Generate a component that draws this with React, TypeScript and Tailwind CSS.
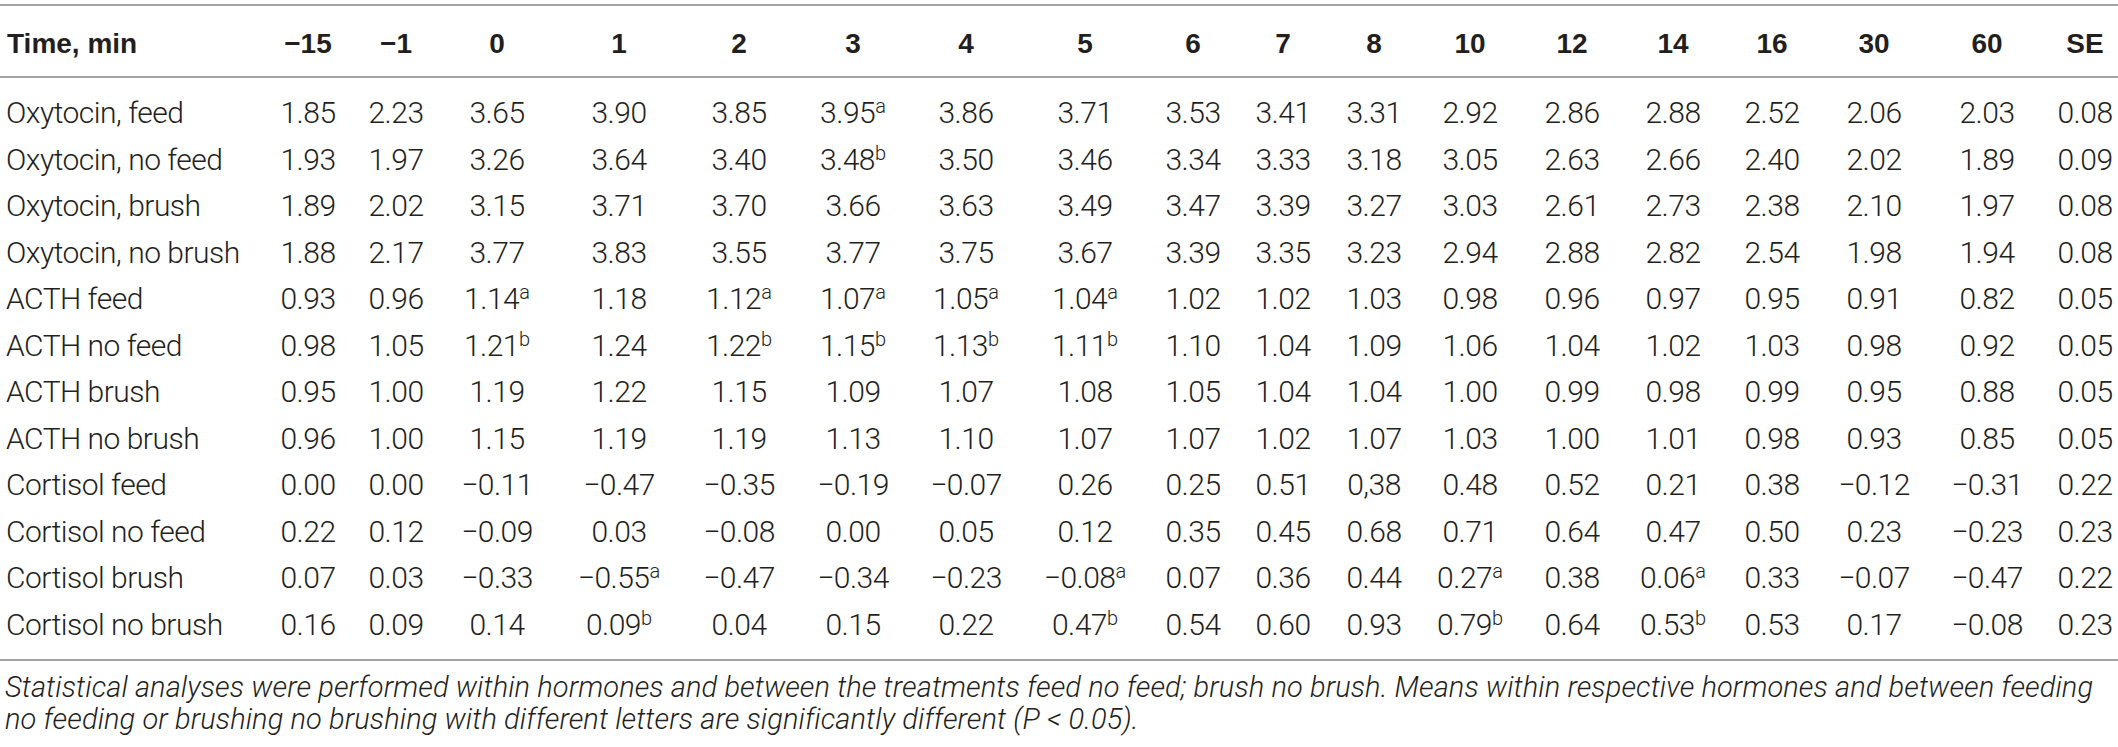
import React from 'react'

type Cell = string | [string, string]

const heads = ['−15', '−1', '0', '1', '2', '3', '4', '5', '6', '7', '8', '10', '12', '14', '16', '30', '60', 'SE']

const rows: { label: string; cells: Cell[] }[] = [
  { label: 'Oxytocin, feed', cells: ['1.85', '2.23', '3.65', '3.90', '3.85', ['3.95', 'a'], '3.86', '3.71', '3.53', '3.41', '3.31', '2.92', '2.86', '2.88', '2.52', '2.06', '2.03', '0.08'] },
  { label: 'Oxytocin, no feed', cells: ['1.93', '1.97', '3.26', '3.64', '3.40', ['3.48', 'b'], '3.50', '3.46', '3.34', '3.33', '3.18', '3.05', '2.63', '2.66', '2.40', '2.02', '1.89', '0.09'] },
  { label: 'Oxytocin, brush', cells: ['1.89', '2.02', '3.15', '3.71', '3.70', '3.66', '3.63', '3.49', '3.47', '3.39', '3.27', '3.03', '2.61', '2.73', '2.38', '2.10', '1.97', '0.08'] },
  { label: 'Oxytocin, no brush', cells: ['1.88', '2.17', '3.77', '3.83', '3.55', '3.77', '3.75', '3.67', '3.39', '3.35', '3.23', '2.94', '2.88', '2.82', '2.54', '1.98', '1.94', '0.08'] },
  { label: 'ACTH feed', cells: ['0.93', '0.96', ['1.14', 'a'], '1.18', ['1.12', 'a'], ['1.07', 'a'], ['1.05', 'a'], ['1.04', 'a'], '1.02', '1.02', '1.03', '0.98', '0.96', '0.97', '0.95', '0.91', '0.82', '0.05'] },
  { label: 'ACTH no feed', cells: ['0.98', '1.05', ['1.21', 'b'], '1.24', ['1.22', 'b'], ['1.15', 'b'], ['1.13', 'b'], ['1.11', 'b'], '1.10', '1.04', '1.09', '1.06', '1.04', '1.02', '1.03', '0.98', '0.92', '0.05'] },
  { label: 'ACTH brush', cells: ['0.95', '1.00', '1.19', '1.22', '1.15', '1.09', '1.07', '1.08', '1.05', '1.04', '1.04', '1.00', '0.99', '0.98', '0.99', '0.95', '0.88', '0.05'] },
  { label: 'ACTH no brush', cells: ['0.96', '1.00', '1.15', '1.19', '1.19', '1.13', '1.10', '1.07', '1.07', '1.02', '1.07', '1.03', '1.00', '1.01', '0.98', '0.93', '0.85', '0.05'] },
  { label: 'Cortisol feed', cells: ['0.00', '0.00', '−0.11', '−0.47', '−0.35', '−0.19', '−0.07', '0.26', '0.25', '0.51', '0,38', '0.48', '0.52', '0.21', '0.38', '−0.12', '−0.31', '0.22'] },
  { label: 'Cortisol no feed', cells: ['0.22', '0.12', '−0.09', '0.03', '−0.08', '0.00', '0.05', '0.12', '0.35', '0.45', '0.68', '0.71', '0.64', '0.47', '0.50', '0.23', '−0.23', '0.23'] },
  { label: 'Cortisol brush', cells: ['0.07', '0.03', '−0.33', ['−0.55', 'a'], '−0.47', '−0.34', '−0.23', ['−0.08', 'a'], '0.07', '0.36', '0.44', ['0.27', 'a'], '0.38', ['0.06', 'a'], '0.33', '−0.07', '−0.47', '0.22'] },
  { label: 'Cortisol no brush', cells: ['0.16', '0.09', '0.14', ['0.09', 'b'], '0.04', '0.15', '0.22', ['0.47', 'b'], '0.54', '0.60', '0.93', ['0.79', 'b'], '0.64', ['0.53', 'b'], '0.53', '0.17', '−0.08', '0.23'] },
]

// column widths follow the original table's auto layout
const grid =
  'grid grid-cols-[258px_100px_76px_126px_118px_122px_106px_120px_118px_98px_82px_100px_92px_112px_90px_108px_96px_130px_66px]'

function Value({ c }: { c: Cell }) {
  if (typeof c === 'string') return <span>{c}</span>
  return (
    <span>
      {c[0]}
      <sup className="text-[20px] font-light tracking-normal">{c[1]}</sup>
    </span>
  )
}

export default function App() {
  return (
    <div className="w-[2118px] h-[747px] bg-white text-[#231f20] overflow-hidden">
      <div className="pt-1">
        <div className={`${grid} border-y-2 border-[#a3a3a3] pt-[18px] pb-[12px] font-['Liberation_Sans',Arial,sans-serif] font-bold text-[28px] leading-[40px]`}>
          <div className="pl-[7px]">Time, min</div>
          {heads.map((h) => (
            <div key={h} className="text-center">{h}</div>
          ))}
        </div>

        <div className="pt-[12px] pb-[11px] border-b-2 border-[#a3a3a3] font-['Roboto',sans-serif] font-light text-[30px] tracking-[-0.5px]">
          {rows.map((r) => (
            <div key={r.label} className={`${grid} h-[46.5px] items-center leading-[34px]`}>
              <div className="pl-[6px] whitespace-nowrap">{r.label}</div>
              {r.cells.map((c, i) => (
                <div key={i} className="text-center whitespace-nowrap">
                  <Value c={c} />
                </div>
              ))}
            </div>
          ))}
        </div>

        <p className="pt-[10px] pl-[5px] font-['Roboto',sans-serif] font-light italic text-[29px] leading-[32px] tracking-[0.1px] whitespace-nowrap">
          Statistical analyses were performed within hormones and between the treatments feed no feed; brush no brush. Means within respective hormones and between feeding
          <br />
          no feeding or brushing no brushing with different letters are significantly different (P &lt; 0.05).
        </p>
      </div>
    </div>
  )
}
